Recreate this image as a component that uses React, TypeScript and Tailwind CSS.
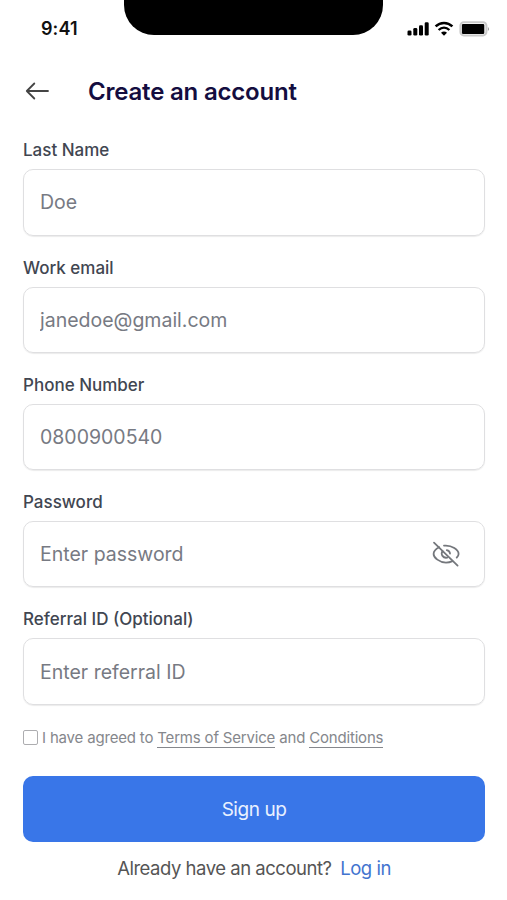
import React from 'react';

const StatusBar: React.FC = () => (
    <div className="relative flex h-[57px] items-start justify-between pl-[41px] pr-[18px] pt-[18px]">
        <span className="text-[18px] leading-[22px] font-semibold tracking-[0.1px] text-[#111111]">9:41</span>

        {/* Notch */}
        <div className="absolute left-[123.5px] top-0 h-[34.6px] w-[259.5px] rounded-b-[30px] bg-black"></div>

        <svg width="82" height="22" viewBox="407 18 82 22" fill="none">
            {/* Signal */}
            <rect x="407.5" y="30.5" width="4" height="5" rx="1.3" fill="#000" />
            <rect x="413.3" y="28" width="4" height="7.5" rx="1.3" fill="#000" />
            <rect x="419" y="25.3" width="4" height="10.2" rx="1.3" fill="#000" />
            <rect x="424.7" y="22.3" width="4" height="13.2" rx="1.3" fill="#000" />
            {/* Wifi */}
            <path d="M435.6 26.4C440.4 21.8 447.6 21.8 452.4 26.4" stroke="#000" strokeWidth="2.5" />
            <path d="M438.6 30C441.9 26.9 446.1 26.9 449.4 30" stroke="#000" strokeWidth="2.3" />
            <path d="M441 32.7C442.8 31.1 445.2 31.1 447 32.7L444 35.7Z" fill="#000" />
            {/* Battery */}
            <rect x="460.4" y="22.2" width="26" height="13.2" rx="3.4" stroke="#cacaca" strokeWidth="2" />
            <rect x="461.9" y="23.9" width="22.4" height="10" rx="1.2" fill="#000" />
            <path d="M487.9 27C489.4 27.7 489.4 30.3 487.9 31Z" fill="#a0a0a0" />
        </svg>
    </div>
);

const EyeOffIcon: React.FC = () => (
    <svg width="28" height="28" viewBox="432 540 28 28" fill="none" stroke="#74777c" strokeWidth="1.8" strokeLinecap="round">
        <path d="M434 542.6L457.6 565.6" />
        <path d="M439.2 547.2C436.2 548.7 433.6 551.6 433.6 553.9C433.6 557.6 439.5 562.6 446 562.6C448.5 562.6 450.6 562 452.5 561.1" />
        <path d="M444 545.7C452 544.8 458.6 550.2 458.6 553.9C458.6 555.1 458 556.2 456.7 557.6" />
        <path d="M442.5 551C440.4 554.4 443 558.4 447.2 557.6" />
        <path d="M446.8 550.1C448.7 550.5 449.9 551.8 450 553.5" />
    </svg>
);

type FieldProps = {
    label: string;
    placeholder: string;
    type?: string;
    icon?: React.ReactNode;
};

const Field: React.FC<FieldProps> = ({ label, placeholder, type = 'text', icon }) => (
    <label className="block">
        <span className="block text-[17px] leading-6 font-medium text-[#414651]">{label}</span>
        <div className="mt-[7px] flex h-[66.3px] items-center rounded-[10px] border-[1.5px] border-[#dfdfe1] pl-4 pr-6 shadow-[0_1px_1px_rgba(0,0,0,0.08)]">
            <input
                type={type}
                placeholder={placeholder}
                className="min-w-0 flex-1 bg-transparent text-[19.5px] leading-7 text-[#414651] outline-none placeholder:text-[#777a83]"
            />
            {icon}
        </div>
    </label>
);

const App: React.FC = () => {
    return (
        <main className="h-[900px] w-full overflow-hidden bg-white font-['Inter','Liberation_Sans',sans-serif]">
            <StatusBar />

            {/* Header */}
            <header className="flex h-[69px] items-center pl-[25px]">
                <svg className="mb-px" width="24" height="20" viewBox="0 0 24 20" fill="none" stroke="#444" strokeWidth="1.8" strokeLinecap="round" strokeLinejoin="round">
                    <path d="M23 10H1.8M9.3 2.5L1.8 10L9.3 17.5" />
                </svg>
                <h1 className="ml-[39px] text-[24px] leading-8 font-semibold tracking-[-0.2px] text-[#140d3f]">Create an account</h1>
            </header>

            <form className="pl-[23px] pr-[22px] pt-[12.3px]">
                <div className="flex flex-col gap-5">
                    <Field label="Last Name" placeholder="Doe" />
                    <Field label="Work email" placeholder="janedoe@gmail.com" />
                    <Field label="Phone Number" placeholder="0800900540" />
                    <Field label="Password" placeholder="Enter password" type="password" icon={<EyeOffIcon />} />
                    <Field label="Referral ID (Optional)" placeholder="Enter referral ID" />
                </div>

                {/* Terms */}
                <div className="mt-[21px] flex h-6 items-center text-[15px] tracking-[-0.18px] text-[#85878c]">
                    <input type="checkbox" className="mr-1 size-[15px] appearance-none rounded-[2px] border border-[#adadb0]" />
                    <p>
                        I have agreed to <a className="border-b border-[#85878c]">Terms of Service</a> and <a className="border-b border-[#85878c]">Conditions</a>
                    </p>
                </div>

                <button type="button" className="mt-[26.2px] h-[66px] w-full rounded-[10px] bg-[#3976e8] pt-0.5 text-[19px] tracking-[-0.45px] text-[#e9f1ff]">
                    Sign up
                </button>

                <p className="mt-3 text-center text-[18.5px] leading-7 tracking-[-0.48px] text-[#555555]">
                    Already have an account? <a className="ml-1 text-[#4274cf]">Log in</a>
                </p>
            </form>
        </main>
    );
};

export default App;
